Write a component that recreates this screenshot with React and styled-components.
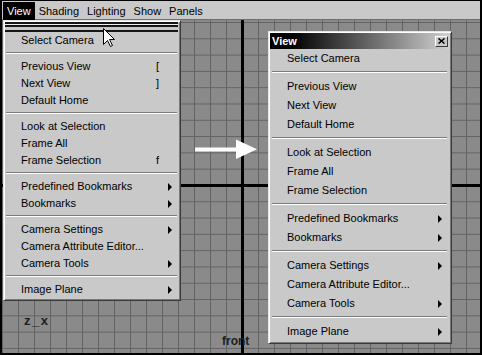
import styled, { createGlobalStyle } from "styled-components";

const GlobalStyle = createGlobalStyle`
  body {
    margin: 0;
    background: #000;
  }
`;

const viewMenu = [
  { label: "Select Camera" },
  "sep",
  { label: "Previous View", accel: "[" },
  { label: "Next View", accel: "]" },
  { label: "Default Home" },
  "sep",
  { label: "Look at Selection" },
  { label: "Frame All" },
  { label: "Frame Selection", accel: "f" },
  "sep",
  { label: "Predefined Bookmarks", sub: true },
  { label: "Bookmarks", sub: true },
  "sep",
  { label: "Camera Settings", sub: true },
  { label: "Camera Attribute Editor..." },
  { label: "Camera Tools", sub: true },
  "sep",
  { label: "Image Plane", sub: true },
];

const menuBarItems = ["View", "Shading", "Lighting", "Show", "Panels"];

const MenuItems = ({ rowH, showAccel }) =>
  viewMenu.map((item, i) =>
    item === "sep" ? (
      <Separator key={i} />
    ) : (
      <MenuRow key={i} $h={rowH}>
        <RowLabel>{item.label}</RowLabel>
        {showAccel && <Accel>{item.accel}</Accel>}
        <SubSlot>{item.sub && <SubArrow />}</SubSlot>
      </MenuRow>
    )
  );

const App = () => {
  return (
    <>
      <GlobalStyle />
      <Frame>
        <MenuBar>
          {menuBarItems.map((m) => (
            <MenuBarItem key={m} $active={m === "View"}>
              {m}
            </MenuBarItem>
          ))}
        </MenuBar>
        <Viewport>
          <AxisV />
          <AxisH />
          <CameraLabel>front</CameraLabel>
          <AxisLabel>z_x</AxisLabel>

          <DropMenu>
            <TearOff />
            <MenuItems rowH={17} showAccel />
          </DropMenu>

          <PointerArrow width="64" height="22" viewBox="0 0 64 22">
            <rect x="0" y="9.5" width="44" height="4" fill="#fff" />
            <polygon points="41,1.5 62,11.3 41,21" fill="#fff" />
          </PointerArrow>

          <TornWindow>
            <TitleBar>
              <TitleText>View</TitleText>
              <CloseBtn>
                <svg width="7" height="6" viewBox="0 0 7 6">
                  <path d="M0.5 0.5 L6.5 5.5 M6.5 0.5 L0.5 5.5" stroke="#000" strokeWidth="1.6" />
                </svg>
              </CloseBtn>
            </TitleBar>
            <MenuItems rowH={19} />
          </TornWindow>
        </Viewport>

        <Cursor width="13" height="20" viewBox="0 0 13 20">
          <path
            d="M0.5 0.5 L0.5 16.5 L4.5 12.5 L7.5 18.5 L9.5 17.5 L6.5 11.5 L11.5 11.5 Z"
            fill="#fff"
            stroke="#000"
            strokeWidth="1"
          />
        </Cursor>
      </Frame>
    </>
  );
};

export default App;

const Frame = styled.div`
  position: relative;
  width: 482px;
  height: 355px;
  box-sizing: border-box;
  padding: 1px 2px 2px 2px;
  background: #000;
  display: flex;
  flex-direction: column;
  font-family: "Liberation Sans", Arial, sans-serif;
  font-size: 11px;
  color: #000;
`;

const MenuBar = styled.div`
  height: 19px;
  box-sizing: border-box;
  padding: 1px 0 0 1px;
  display: flex;
  align-items: flex-start;
  background: #c9c9c9;
  border-bottom: 1px solid #6e6e6e;
  flex-shrink: 0;
`;

const MenuBarItem = styled.div`
  height: 18px;
  line-height: 18px;
  padding: 0 4px;
  background: ${(p) => (p.$active ? "#000" : "transparent")};
  color: ${(p) => (p.$active ? "#fff" : "#000")};
`;

const Viewport = styled.div`
  position: relative;
  flex: 1;
  overflow: hidden;
  background-color: #8a8a8a;
  background-image: linear-gradient(to right, #636363 1px, transparent 1px),
    linear-gradient(to bottom, #636363 1px, transparent 1px);
  background-size: 16px 100%, 100% 16.3px;
  background-position: 0 0, 0 2px;
`;

const AxisV = styled.div`
  position: absolute;
  left: 239px;
  top: 0;
  bottom: 0;
  width: 3px;
  background: #000;
`;

const AxisH = styled.div`
  position: absolute;
  top: 164px;
  left: 0;
  right: 0;
  height: 3px;
  background: #000;
`;

const CameraLabel = styled.div`
  position: absolute;
  left: 220px;
  top: 315px;
  font-size: 12px;
  line-height: 12px;
  font-weight: bold;
  color: #1e1e1e;
`;

const AxisLabel = styled.div`
  position: absolute;
  left: 22px;
  top: 294px;
  font-size: 13px;
  line-height: 13px;
  font-weight: bold;
  letter-spacing: 1.5px;
  color: #1e1e1e;
`;

const DropMenu = styled.div`
  position: absolute;
  left: 1px;
  top: 0;
  width: 178px;
  box-sizing: border-box;
  padding-bottom: 2px;
  background: #c9c9c9;
  border: 1px solid;
  border-color: #e6e6e6 #3a3a3a #3a3a3a #e6e6e6;
  box-shadow: inset 1px 1px #fff, inset -1px -1px #7a7a7a;
`;

const TearOff = styled.div`
  height: 11px;
  margin: 0 2px 0 1px;
  background: linear-gradient(
    to bottom,
    transparent 0 1px,
    #161616 1px 3px,
    #ececec 3px 4px,
    #161616 4px 6px,
    transparent 6px 9px,
    #161616 9px 11px
  );
`;

const MenuRow = styled.div`
  height: ${(p) => p.$h}px;
  line-height: ${(p) => p.$h}px;
  display: flex;
  align-items: center;
  padding-left: 17px;
  white-space: nowrap;
`;

const RowLabel = styled.span`
  flex: 1;
`;

const Accel = styled.span`
  width: 11px;
  padding-left: 1px;
`;

const SubSlot = styled.span`
  width: 13px;
  height: 100%;
  display: flex;
  align-items: center;
`;

const SubArrow = styled.span`
  width: 0;
  height: 0;
  margin-left: 1px;
  border-left: 4px solid #000;
  border-top: 4px solid transparent;
  border-bottom: 4px solid transparent;
`;

const Separator = styled.div`
  height: 2px;
  box-sizing: border-box;
  margin: 3px 3px 4px 2px;
  border-top: 1px solid #7c7c7c;
  border-bottom: 1px solid #fff;
`;

const PointerArrow = styled.svg`
  position: absolute;
  left: 193px;
  top: 118px;
`;

const TornWindow = styled.div`
  position: absolute;
  left: 266px;
  top: 11px;
  width: 184px;
  box-sizing: border-box;
  padding: 1px 1px 2px 1px;
  background: #c9c9c9;
  border: 1px solid;
  border-color: #e6e6e6 #3a3a3a #3a3a3a #e6e6e6;
  box-shadow: inset 1px 1px #fff, inset -1px -1px #7a7a7a;
`;

const TitleBar = styled.div`
  height: 16px;
  display: flex;
  align-items: center;
  justify-content: space-between;
  padding: 0 2px 0 2px;
  background: linear-gradient(to right, #000 12%, #d2d2d2 100%);
`;

const TitleText = styled.span`
  color: #fff;
  font-weight: bold;
  font-size: 11px;
`;

const CloseBtn = styled.div`
  width: 13px;
  height: 11px;
  box-sizing: border-box;
  display: flex;
  align-items: center;
  justify-content: center;
  background: #c9c9c9;
  border: 1px solid;
  border-color: #fff #3a3a3a #3a3a3a #fff;
`;

const Cursor = styled.svg`
  position: absolute;
  left: 103px;
  top: 28px;
`;
